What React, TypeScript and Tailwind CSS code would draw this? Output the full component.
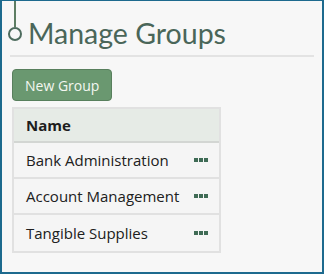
export default function App() {
  const groups = ['Bank Administration', 'Account Management', 'Tangible Supplies'];

  return (
    <div className="w-[324px] h-[274px] bg-[#f7f7f7] border-2 border-t border-[#1d6a8e] overflow-hidden font-['Open_Sans',sans-serif]">
      <div className="relative h-[56px] border-b-2 border-[#e3e3e3] mx-[8px]">
        {/* hanging line + ring */}
        <div className="absolute left-[4px] top-0 w-[2px] h-[26px] bg-[#5d7d63]" />
        <div className="absolute left-[-2px] top-[26px] w-[14px] h-[14px] rounded-full border-2 border-[#4e6c5e] bg-[#f7f7f7]" />
        <h1 className="absolute left-[18px] top-[14px] text-[28.5px] leading-[36px] text-[#4a6659] font-['Lato',sans-serif]">
          Manage Groups
        </h1>
      </div>

      <div className="px-[10px] pt-[12px]">
        <button className="h-[32px] px-[12px] rounded-[4px] bg-[#6a9870] border border-[#587f5d] text-[#f4f7f1] text-[14px]">
          New Group
        </button>

        <div className="mt-[6px] w-[209px] border-2 border-[#e1e1e1]">
          <div className="h-[34px] flex items-center px-[12px] bg-[#e6ebe6] border-b-2 border-[#d3d6d3] text-[15px] font-bold text-[#1d1d1d]">
            Name
          </div>
          {groups.map((g, i) => (
            <div
              key={g}
              className={`h-[36px] flex items-center justify-between pl-[12px] pr-[11px] bg-[#f5f5f5] text-[15px] text-[#202020] ${
                i < groups.length - 1 ? 'border-b-2 border-[#e1e1e1]' : ''
              }`}
            >
              <span className="whitespace-nowrap">{g}</span>
              <span className="flex gap-[1px]">
                <span className="w-[4px] h-[4px] bg-[#3f6b55]" />
                <span className="w-[4px] h-[4px] bg-[#3f6b55]" />
                <span className="w-[4px] h-[4px] bg-[#3f6b55]" />
              </span>
            </div>
          ))}
        </div>
      </div>
    </div>
  );
}
